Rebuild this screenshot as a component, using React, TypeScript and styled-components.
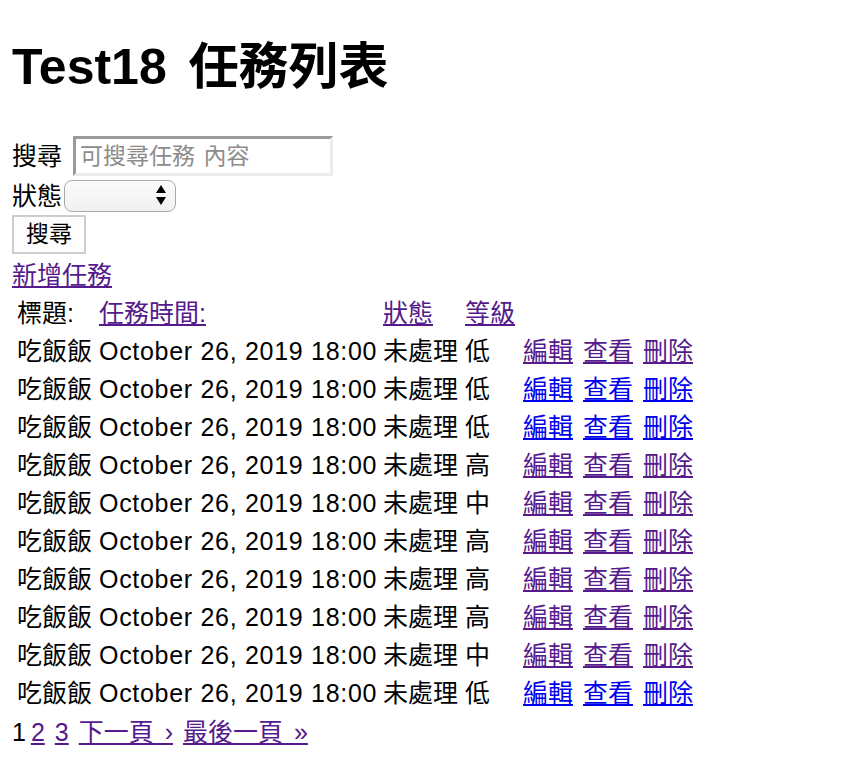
import React from "react";
import styled, { createGlobalStyle } from "styled-components";

const GlobalStyle = createGlobalStyle`
  html, body {
    margin: 0;
    padding: 0;
    background: #ffffff;
  }
  body {
    font-family: "Liberation Sans", "Noto Sans CJK TC", sans-serif;
    font-size: 25px;
    color: #000000;
  }
`;

const Page = styled.div`
  padding: 0 12px;
`;

const Title = styled.h1`
  margin: 32px 0;
  font-size: 50px;
  line-height: 70px;
  font-weight: 700;
  word-spacing: 8px;
  white-space: nowrap;
`;

const SearchForm = styled.form`
  display: flex;
  flex-direction: column;
  align-items: flex-start;
`;

const FieldRow = styled.div<{ $h: number; $gap: number }>`
  display: flex;
  align-items: center;
  height: ${(p) => p.$h}px;
  gap: ${(p) => p.$gap}px;
`;

const Label = styled.label`
  line-height: 1;
  white-space: nowrap;
`;

const TextInput = styled.input`
  box-sizing: border-box;
  width: 260px;
  height: 40px;
  margin: 0;
  border-style: solid;
  border-width: 3px;
  border-color: #9a9a9a #ececec #ececec #9a9a9a;
  padding: 0 4px;
  font: 23px "Liberation Sans", "Noto Sans CJK TC", sans-serif;
  word-spacing: 2px;
  color: #000;
  background: #fff;
  outline: none;
  &::placeholder {
    color: #8c8c8c;
  }
`;

const SelectWrap = styled.div`
  position: relative;
  width: 112px;
  height: 32px;
`;

const Select = styled.select`
  appearance: none;
  -webkit-appearance: none;
  box-sizing: border-box;
  width: 100%;
  height: 100%;
  margin: 0;
  border: 1.5px solid #a9a9a9;
  border-radius: 8px;
  background: linear-gradient(#fbfbfb, #f1f1f1);
  font: 20px "Liberation Sans", "Noto Sans CJK TC", sans-serif;
  outline: none;
`;

const Arrows = styled.svg`
  position: absolute;
  right: 10px;
  top: 4px;
  pointer-events: none;
`;

const SubmitButton = styled.button`
  box-sizing: border-box;
  width: 74px;
  height: 39px;
  margin: 1px 0 2px;
  padding: 0;
  border: 2px solid #cdcdcd;
  background: #fdfdfd;
  font: 23px "Liberation Sans", "Noto Sans CJK TC", sans-serif;
  color: #000;
  line-height: 1;
`;

const AddRow = styled.div`
  line-height: 38px;
  height: 38px;
`;

const Link = styled.a<{ $visited?: boolean }>`
  color: ${(p) => (p.$visited ? "#551a8b" : "#0000ee")};
  text-decoration: underline;
  cursor: pointer;
  white-space: nowrap;
`;

const TaskTable = styled.div`
  display: flex;
  flex-direction: column;
  padding-left: 5px;
`;

const Row = styled.div`
  display: grid;
  grid-template-columns: 82px 284px 82px 58px 60px 60px 60px;
  height: 38px;
  line-height: 38px;
  white-space: nowrap;
`;

const Cell = styled.div`
  overflow: visible;
`;

const DateCell = styled.div`
  letter-spacing: 0.7px;
`;

const Pager = styled.div`
  display: flex;
  align-items: center;
  gap: 10px;
  height: 40px;
  line-height: 40px;
  word-spacing: 4px;
  white-space: nowrap;
`;

const CurrentPage = styled.span`
  margin-right: -5px;
`;

const levels = ["低", "低", "低", "高", "中", "高", "高", "高", "中", "低"];
const visited = [true, false, false, true, true, true, true, true, true, false];

export default function App() {
  return (
    <>
      <GlobalStyle />
      <Page>
        <Title>Test18 任務列表</Title>
        <SearchForm onSubmit={(e) => e.preventDefault()}>
          <FieldRow $h={44} $gap={11}>
            <Label>搜尋</Label>
            <TextInput placeholder="可搜尋任務 內容" />
          </FieldRow>
          <FieldRow $h={36} $gap={2}>
            <Label>狀態</Label>
            <SelectWrap>
              <Select defaultValue="">
                <option value=""></option>
                <option value="pending">未處理</option>
                <option value="doing">處理中</option>
                <option value="done">已完成</option>
              </Select>
              <Arrows width="10" height="22" viewBox="0 0 10 22">
                <polygon points="0,9 5,1 10,9" fill="#000" />
                <polygon points="0,13 5,21 10,13" fill="#000" />
              </Arrows>
            </SelectWrap>
          </FieldRow>
          <SubmitButton type="submit">搜尋</SubmitButton>
        </SearchForm>
        <AddRow>
          <Link $visited>新增任務</Link>
        </AddRow>
        <TaskTable>
          <Row>
            <Cell>標題:</Cell>
            <Cell>
              <Link $visited>任務時間:</Link>
            </Cell>
            <Cell>
              <Link $visited>狀態</Link>
            </Cell>
            <Cell>
              <Link $visited>等級</Link>
            </Cell>
          </Row>
          {levels.map((lv, i) => (
            <Row key={i}>
              <Cell>吃飯飯</Cell>
              <DateCell>October 26, 2019 18:00</DateCell>
              <Cell>未處理</Cell>
              <Cell>{lv}</Cell>
              <Cell>
                <Link $visited={visited[i]}>編輯</Link>
              </Cell>
              <Cell>
                <Link $visited={visited[i]}>查看</Link>
              </Cell>
              <Cell>
                <Link $visited={visited[i]}>刪除</Link>
              </Cell>
            </Row>
          ))}
        </TaskTable>
        <Pager>
          <CurrentPage>1</CurrentPage>
          <Link $visited>2</Link>
          <Link $visited>3</Link>
          <Link $visited>下一頁 ›</Link>
          <Link $visited>最後一頁 »</Link>
        </Pager>
      </Page>
    </>
  );
}
